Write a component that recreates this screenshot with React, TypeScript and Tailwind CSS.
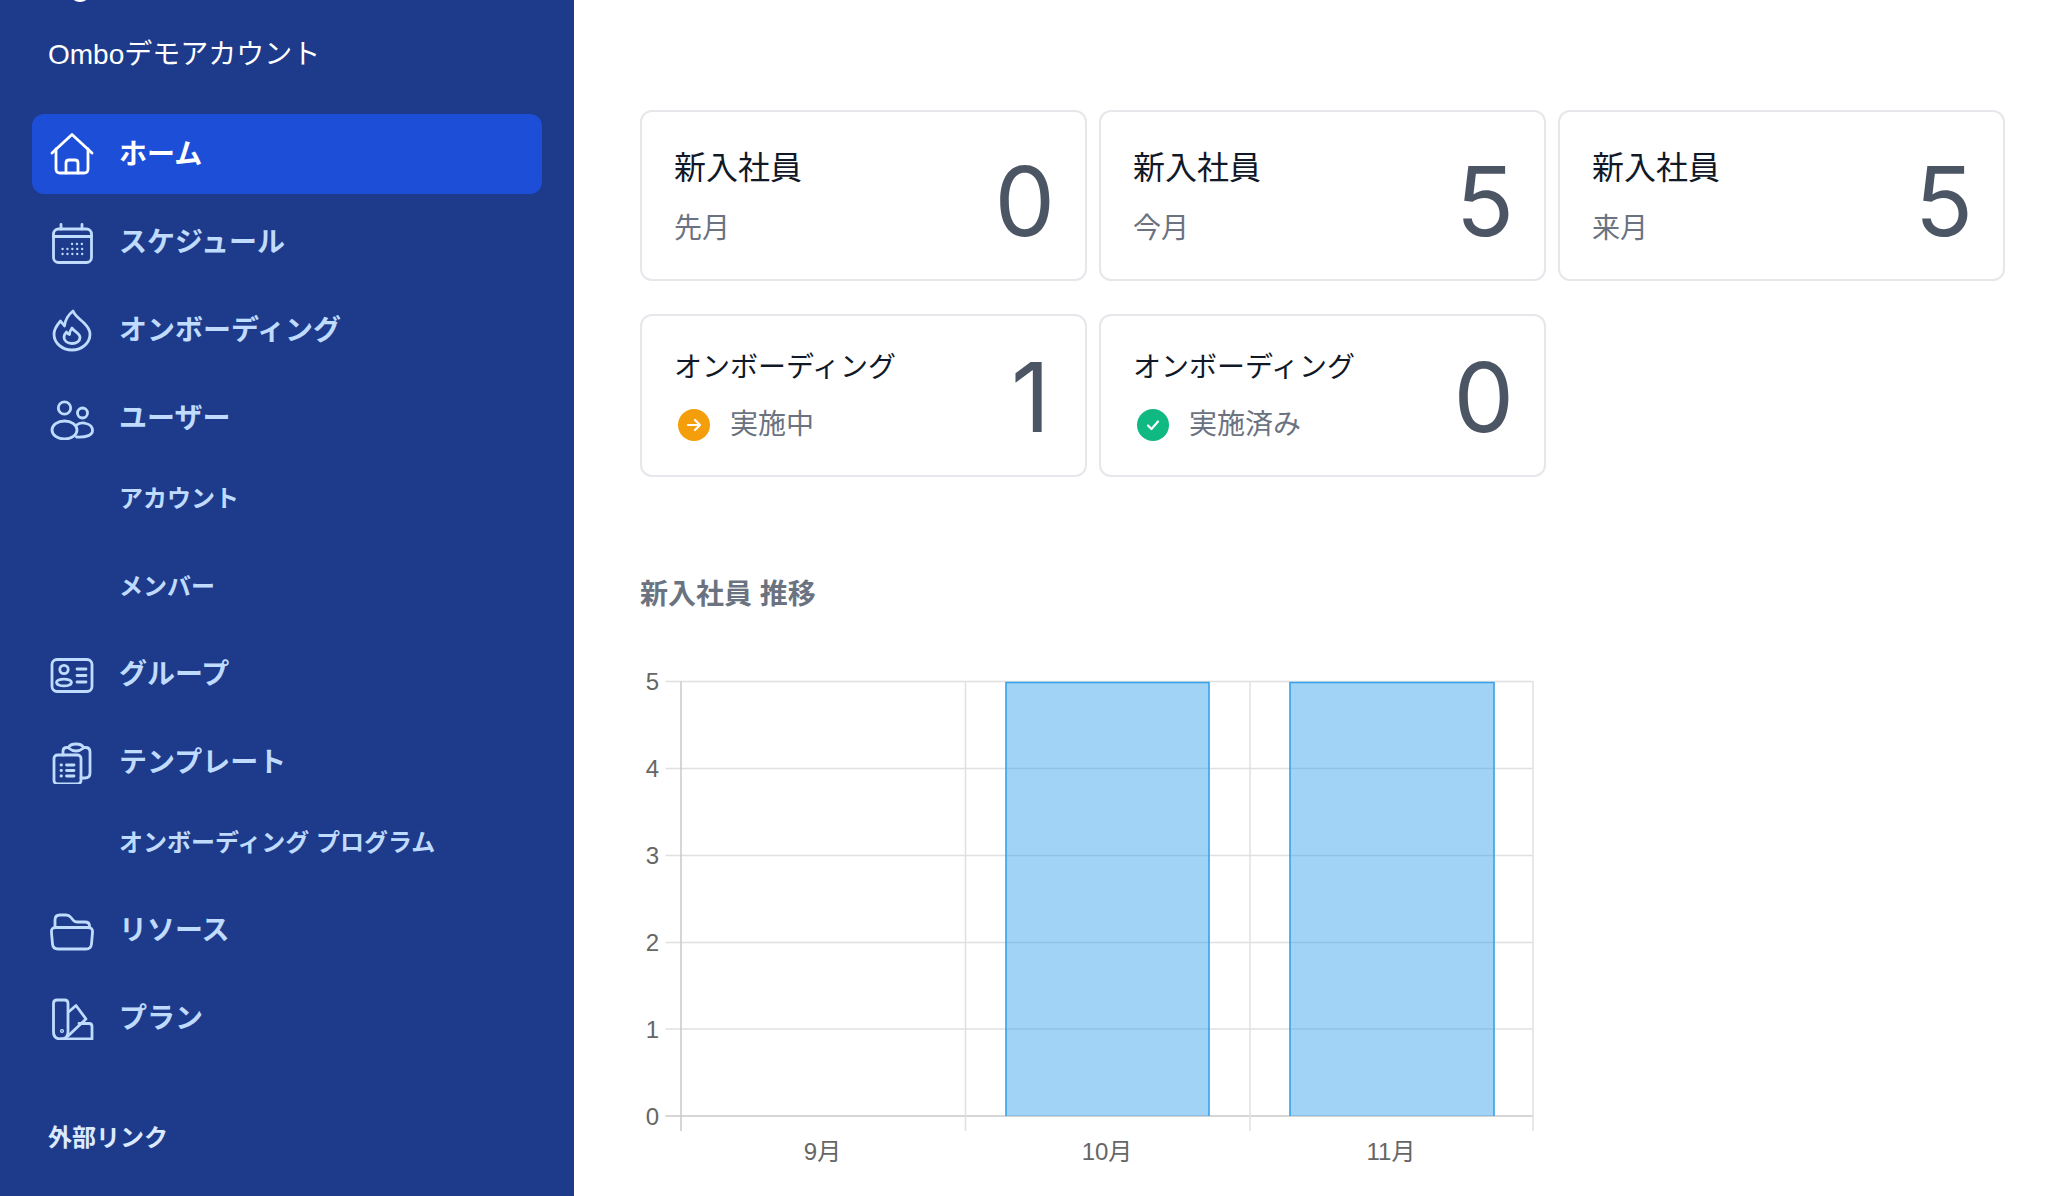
import React from "react";

const sans = "font-['Liberation_Sans','Noto_Sans_CJK_JP',sans-serif]";

type IconProps = { className?: string };
const base = {
  viewBox: "0 0 44 44",
  fill: "none",
  stroke: "currentColor",
  strokeWidth: 2.8,
  strokeLinecap: "round" as const,
  strokeLinejoin: "round" as const,
};

const HomeIcon = ({ className }: IconProps) => (
  <svg {...base} className={className}>
    <path d="M2 21 L22 2.5 L42 21" />
    <path d="M6 17 V37 Q6 41 10 41 H34 Q38 41 38 37 V17" />
    <path d="M16 41 V31 Q16 28 19 28 H25 Q28 28 28 31 V41" />
  </svg>
);
const CalendarIcon = ({ className }: IconProps) => (
  <svg {...base} className={className}>
    <rect x="3.5" y="9" width="38" height="33.5" rx="5" />
    <path d="M3.5 16.5 H41.5" />
    <path d="M11 4.5 V9 M32 4.5 V9" />
    <g strokeWidth="2.3" strokeDasharray="0.1 4.8">
      <path d="M22 24 H33" />
      <path d="M12.5 29 H33" />
      <path d="M12.5 34 H33" />
    </g>
  </svg>
);
const FireIcon = ({ className }: IconProps) => (
  <svg {...base} className={className}>
    <path d="M23 3 C25 8 30 11 34 15 C38 19 40 22 40 26 C40 35 32 42 22 42 C12 42 4 35 4 26 C4 21 7 17 10.5 13 L14.5 18 C15 12 18 7 23 3 Z" />
    <path d="M22 20 C23.5 23 30 25 30 29.5 C30 33 26.5 35.5 22 35.5 C17.5 35.5 14 33 14 29 C14 27 15 25.5 16.5 24 C17.5 25.5 18.5 26.5 19.5 26.5 C19.5 24 20.5 22 22 20 Z" />
  </svg>
);
const UsersIcon = ({ className }: IconProps) => (
  <svg {...base} className={className}>
    <circle cx="14.5" cy="12" r="6.2" />
    <circle cx="32.5" cy="17" r="5" />
    <ellipse cx="14.5" cy="34" rx="12.5" ry="9" />
    <path d="M26 29.5 C29 27 33 26.5 36 27.5 C40 28.5 42.5 31 42.5 34.5 C42.5 39 37 41.5 26.5 41" />
  </svg>
);
const CardIcon = ({ className }: IconProps) => (
  <svg {...base} className={className}>
    <rect x="2" y="7.5" width="40" height="32" rx="5" />
    <circle cx="14" cy="17.5" r="4.2" />
    <ellipse cx="14" cy="30.5" rx="7.5" ry="3.4" />
    <path d="M27 17 H36 M27 23.5 H36 M27 30 H36" />
  </svg>
);
const ClipboardIcon = ({ className }: IconProps) => (
  <svg {...base} className={className}>
    <path d="M13 15 V11 Q13 7.5 17 7.5 H18.5 Q20 4 26 4 Q32 4 33.5 7.5 H35.5 Q40 7.5 40 12 V33 Q40 38 35 38 H31" />
    <path d="M18.5 8 Q22 11 26 11 Q30 11 33.5 8" />
    <rect x="4" y="15" width="27" height="29" rx="3.5" />
    <path d="M11 25 H11.5 M16.5 25 H24 M11 30.5 H11.5 M16.5 30.5 H24 M11 36 H11.5 M16.5 36 H24" />
  </svg>
);
const FolderIcon = ({ className }: IconProps) => (
  <svg {...base} className={className}>
    <path d="M5 19.5 V12 Q5 7 10 7 H16 Q19 7 21 9.5 L23 12 Q24.5 14 27 14 H35 Q39.5 14 39.5 18 V19.5" />
    <path d="M5.5 19.5 H38 Q43 19.5 42.5 24.5 L41.5 36 Q41 41 36 41 H8 Q3 41 2.5 36 L1.5 24.5 Q1 19.5 5.5 19.5 Z" />
  </svg>
);
const SwatchIcon = ({ className }: IconProps) => (
  <svg {...base} className={className}>
    <path d="M3.5 7.5 Q3.5 4 7 4 H14.5 Q18 4 18 7.5 V36 Q18 43 11 43 Q3.5 43 3.5 36 Z" />
    <path d="M18.5 16 L26 9.5 L36 23 L18 40" />
    <path d="M29 27.5 H39 Q42 27.5 42 30.5 V43 H11" />
    <circle cx="12" cy="35" r="0.7" />
  </svg>
);

type Item = { label: string; icon?: React.FC<IconProps>; subs?: string[]; active?: boolean };
const items: Item[] = [
  { label: "ホーム", icon: HomeIcon, active: true },
  { label: "スケジュール", icon: CalendarIcon },
  { label: "オンボーディング", icon: FireIcon },
  { label: "ユーザー", icon: UsersIcon, subs: ["アカウント", "メンバー"] },
  { label: "グループ", icon: CardIcon },
  { label: "テンプレート", icon: ClipboardIcon, subs: ["オンボーディング プログラム"] },
  { label: "リソース", icon: FolderIcon },
  { label: "プラン", icon: SwatchIcon },
];

function Sidebar() {
  return (
    <aside className="w-[574px] shrink-0 h-[1196px] bg-[#1e3a8a] overflow-hidden relative">
      <div className="absolute left-[69px] top-[-20px] w-[22px] h-[22px] rounded-full bg-white" />
      <div className="pl-[48px] pt-[36px] h-[114px] text-white text-[28px] leading-[38px]">Omboデモアカウント</div>
      <nav className="flex flex-col gap-[8px] pl-[32px] w-[542px]">
        {items.map((it) => {
          const Icon = it.icon!;
          return (
            <div key={it.label} className="flex flex-col">
              <div
                className={`flex items-center h-[80px] rounded-[12px] pl-[18px] text-[28px] font-bold ${
                  it.active ? "bg-[#1d4ed8] text-white" : "text-[#bfdbfe]"
                }`}
              >
                <Icon className="w-[44px] h-[44px] shrink-0" />
                <span className="ml-[25px] pt-[2px]">{it.label}</span>
              </div>
              {it.subs && (
                <div className="flex flex-col gap-[8px]">
                  {it.subs.map((s) => (
                    <div key={s} className="flex items-center h-[80px] pl-[87px] pt-[2px] text-[24px] font-bold text-[#bfdbfe]">
                      {s}
                    </div>
                  ))}
                </div>
              )}
            </div>
          );
        })}
      </nav>
      <div className="pl-[48px] mt-[64px] text-[24px] leading-[32px] font-bold text-[#dbeafe]">外部リンク</div>
    </aside>
  );
}

const numberFont = "font-['Inter','Liberation_Sans',sans-serif] font-[410]";

function Stat({ title, sub, value }: { title: string; sub: string; value: number }) {
  return (
    <div className="h-[171px] rounded-[12px] border-2 border-[#e5e7eb] bg-white pl-[32px] pr-[30px] flex items-center justify-between">
      <div className="flex flex-col mt-[2px]">
        <div className="text-[32px] leading-[44px] text-[#111827]">{title}</div>
        <div className="text-[28px] leading-[38px] text-[#6b7280] mt-[20px]">{sub}</div>
      </div>
      <div className={`text-[96px] leading-[96px] text-[#4b5563] mt-[11px] ${numberFont}`}>{value}</div>
    </div>
  );
}

function Stat2({ sub, value, status }: { sub: string; value: number; status: "run" | "done" }) {
  return (
    <div className="h-[163px] rounded-[12px] border-2 border-[#e5e7eb] bg-white pl-[32px] pr-[30px] flex items-center justify-between">
      <div className="flex flex-col mt-[1px]">
        <div className="text-[28px] leading-[38px] text-[#111827]">オンボーディング</div>
        <div className="flex items-center mt-[19px] h-[38px] text-[28px] text-[#6b7280]">
          <span
            className={`ml-[4px] w-[32px] h-[32px] rounded-full flex items-center justify-center ${
              status === "run" ? "bg-[#f59e0b]" : "bg-[#10b981]"
            }`}
          >
            <svg viewBox="0 0 20 20" className="w-[20px] h-[20px]" fill="none" stroke="white" strokeWidth="2.2" strokeLinecap="round" strokeLinejoin="round">
              {status === "run" ? <path d="M4 10 H16 M11 5 L16 10 L11 15" /> : <path d="M5 10.5 L8.5 14 L15 6.5" />}
            </svg>
          </span>
          <span className="ml-[20px]">{sub}</span>
        </div>
      </div>
      <div className={`text-[96px] leading-[96px] text-[#4b5563] mt-[2px] ${value === 1 ? "pr-[5px]" : ""} ${numberFont}`}>{value}</div>
    </div>
  );
}

function Chart() {
  const ox = 640;
  const oy = 660;
  const ys = [681.5, 768.5, 855.5, 942.5, 1029, 1116];
  const xs = [681, 965.5, 1250, 1533];
  const grid = "#e0e0e0";
  const axis = "#c8c8c8";
  return (
    <svg className="block" width="900" height="510" viewBox={`${ox} ${oy} 900 510`} fontFamily="'Liberation Sans','Noto Sans CJK JP',sans-serif">
      {ys.map((y, i) => (
        <line key={y} x1={665.5} x2={1533} y1={y} y2={y} stroke={i === 5 ? axis : grid} strokeWidth={1.5} />
      ))}
      {xs.map((x, i) => (
        <line key={x} x1={x} x2={x} y1={681.5} y2={1131} stroke={i === 0 ? axis : grid} strokeWidth={1.5} />
      ))}
      {[[1006, 1209], [1290, 1494]].map(([a, b]) => (
        <path key={a} d={`M${a} 1116 V682.5 H${b} V1116`} fill="rgba(54,162,235,0.47)" stroke="#36a2eb" strokeWidth={1.6} />
      ))}
      {["5", "4", "3", "2", "1", "0"].map((t, i) => (
        <text key={t} x={659} y={ys[i] + 8.5} textAnchor="end" fontSize={24} fill="#666666">
          {t}
        </text>
      ))}
      {[["9月", 822.5], ["10月", 1107], ["11月", 1391]].map(([t, x]) => (
        <text key={t as string} x={x as number} y={1160} textAnchor="middle" fontSize={24} fill="#666666">
          {t}
        </text>
      ))}
    </svg>
  );
}

export default function App() {
  return (
    <div className={`flex w-[2062px] h-[1196px] overflow-hidden bg-white ${sans}`}>
      <Sidebar />
      <main className="flex-1 pl-[66px] pr-[57px] pt-[110px]">
        <div className="grid grid-cols-3 gap-x-[12px] gap-y-[33px]">
          <Stat title="新入社員" sub="先月" value={0} />
          <Stat title="新入社員" sub="今月" value={5} />
          <Stat title="新入社員" sub="来月" value={5} />
          <Stat2 sub="実施中" value={1} status="run" />
          <Stat2 sub="実施済み" value={0} status="done" />
        </div>
        <h2 className="mt-[99px] text-[28px] leading-[38px] font-bold text-[#6b7280]">新入社員 推移</h2>
        <div className="mt-[46px]">
          <Chart />
        </div>
      </main>
    </div>
  );
}
